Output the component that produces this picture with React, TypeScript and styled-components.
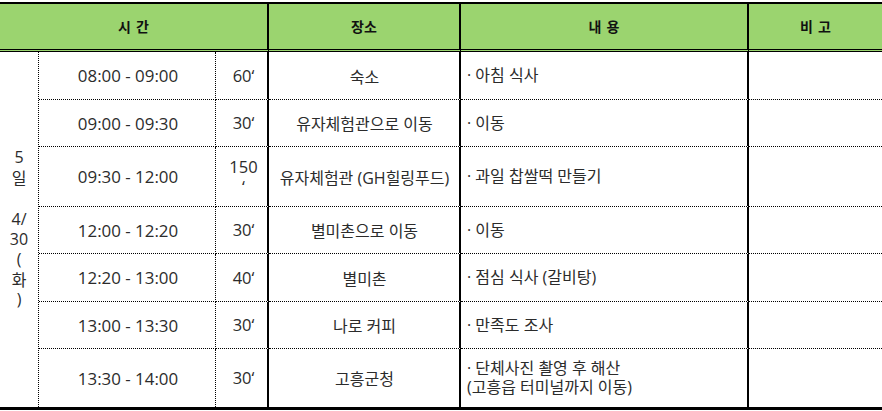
import React from "react";
import styled, { createGlobalStyle, css } from "styled-components";

const GlobalStyle = createGlobalStyle`
  html, body {
    margin: 0;
    padding: 0;
    background: #ffffff;
  }
  body {
    font-family: "Open Sans", "Noto Sans CJK KR", sans-serif;
    color: #2b2b2b;
  }
`;

const Sheet = styled.div`
  margin-top: 2px;
  width: 882px;
  display: grid;
  grid-template-columns: 39px 177px 53px 192px 288px 133px;
  grid-template-rows: 48px 48px 47px 60px 47px 48px 47px 58px;
  border-top: 2px solid #000;
  border-bottom: 3px solid #000;
  box-sizing: border-box;
`;

const HeaderCell = styled.div<{ $span?: number; $last?: boolean }>`
  grid-column: span ${(p) => p.$span ?? 1};
  background: #9bd46f;
  display: flex;
  align-items: center;
  justify-content: center;
  box-sizing: border-box;
  border-bottom: 3px double #000;
  border-right: ${(p) => (p.$last ? "none" : "2px solid #000")};
  font-family: "Noto Sans CJK KR", sans-serif;
  font-weight: 700;
  font-size: 14px;
  color: #111;
  padding-bottom: 1px;
  word-spacing: 2px;
`;

const DayCell = styled.div`
  grid-column: 1;
  grid-row: 2 / span 7;
  border-right: 1px dotted #000;
  display: flex;
  flex-direction: column;
  align-items: center;
  justify-content: center;
  box-sizing: border-box;
  padding-bottom: 3px;
`;

const DayLine = styled.span<{ $kr?: boolean; $blank?: boolean }>`
  display: block;
  height: ${(p) => (p.$blank ? "22px" : "20px")};
  line-height: 20px;
  font-size: 16px;
  font-family: ${(p) =>
    p.$kr ? `"Noto Sans CJK KR", sans-serif` : `"Open Sans", "Noto Sans CJK KR", sans-serif`};
`;

const cellBase = css<{ $last?: boolean }>`
  display: flex;
  align-items: center;
  box-sizing: border-box;
  border-bottom: ${(p) => (p.$last ? "none" : "1px dotted #000")};
`;

const TimeCell = styled.div<{ $last?: boolean }>`
  ${cellBase};
  justify-content: center;
  border-right: 1px dotted #000;
  font-size: 16.9px;
  padding-left: 2px;
`;

const MinCell = styled.div<{ $last?: boolean }>`
  ${cellBase};
  flex-direction: column;
  justify-content: center;
  border-right: 2px solid #000;
  font-size: 16.5px;
  line-height: 20px;
  text-align: center;
  padding-left: 4px;
`;

const PlaceCell = styled.div<{ $last?: boolean }>`
  ${cellBase};
  justify-content: center;
  border-right: 2px solid #000;
  font-size: 16px;
  padding-left: 1px;
`;

const ContentCell = styled.div<{ $last?: boolean }>`
  ${cellBase};
  border-right: 2px solid #000;
  font-size: 16px;
  line-height: 19px;
  padding-left: 6px;
`;

const NoteCell = styled.div<{ $last?: boolean }>`
  ${cellBase};
`;

const Lines = styled.div`
  display: flex;
  flex-direction: column;
`;

type Row = {
  time: string;
  min: string[];
  place: string;
  content: string[];
};

const rows: Row[] = [
  { time: "08:00 - 09:00", min: ["60‘"], place: "숙소", content: ["· 아침 식사"] },
  { time: "09:00 - 09:30", min: ["30‘"], place: "유자체험관으로 이동", content: ["· 이동"] },
  { time: "09:30 - 12:00", min: ["150", "‘"], place: "유자체험관 (GH힐링푸드)", content: ["· 과일 찹쌀떡 만들기"] },
  { time: "12:00 - 12:20", min: ["30‘"], place: "별미촌으로 이동", content: ["· 이동"] },
  { time: "12:20 - 13:00", min: ["40‘"], place: "별미촌", content: ["· 점심 식사 (갈비탕)"] },
  { time: "13:00 - 13:30", min: ["30‘"], place: "나로 커피", content: ["· 만족도 조사"] },
  {
    time: "13:30 - 14:00",
    min: ["30‘"],
    place: "고흥군청",
    content: ["· 단체사진 촬영 후 해산", "(고흥읍 터미널까지 이동)"],
  },
];

export default function App() {
  return (
    <>
      <GlobalStyle />
      <Sheet>
        <HeaderCell $span={3}>시 간</HeaderCell>
        <HeaderCell>장소</HeaderCell>
        <HeaderCell>내 용</HeaderCell>
        <HeaderCell $last>비 고</HeaderCell>

        <DayCell>
          <DayLine>5</DayLine>
          <DayLine $kr>일</DayLine>
          <DayLine $blank />
          <DayLine>4/</DayLine>
          <DayLine>30</DayLine>
          <DayLine>(</DayLine>
          <DayLine $kr>화</DayLine>
          <DayLine>)</DayLine>
        </DayCell>

        {rows.map((r, i) => {
          const last = i === rows.length - 1;
          return (
            <React.Fragment key={r.time}>
              <TimeCell $last={last}>{r.time}</TimeCell>
              <MinCell $last={last}>
                {r.min.map((m) => (
                  <span key={m}>{m}</span>
                ))}
              </MinCell>
              <PlaceCell $last={last}>{r.place}</PlaceCell>
              <ContentCell $last={last}>
                <Lines>
                  {r.content.map((c) => (
                    <span key={c}>{c}</span>
                  ))}
                </Lines>
              </ContentCell>
              <NoteCell $last={last} />
            </React.Fragment>
          );
        })}
      </Sheet>
    </>
  );
}
